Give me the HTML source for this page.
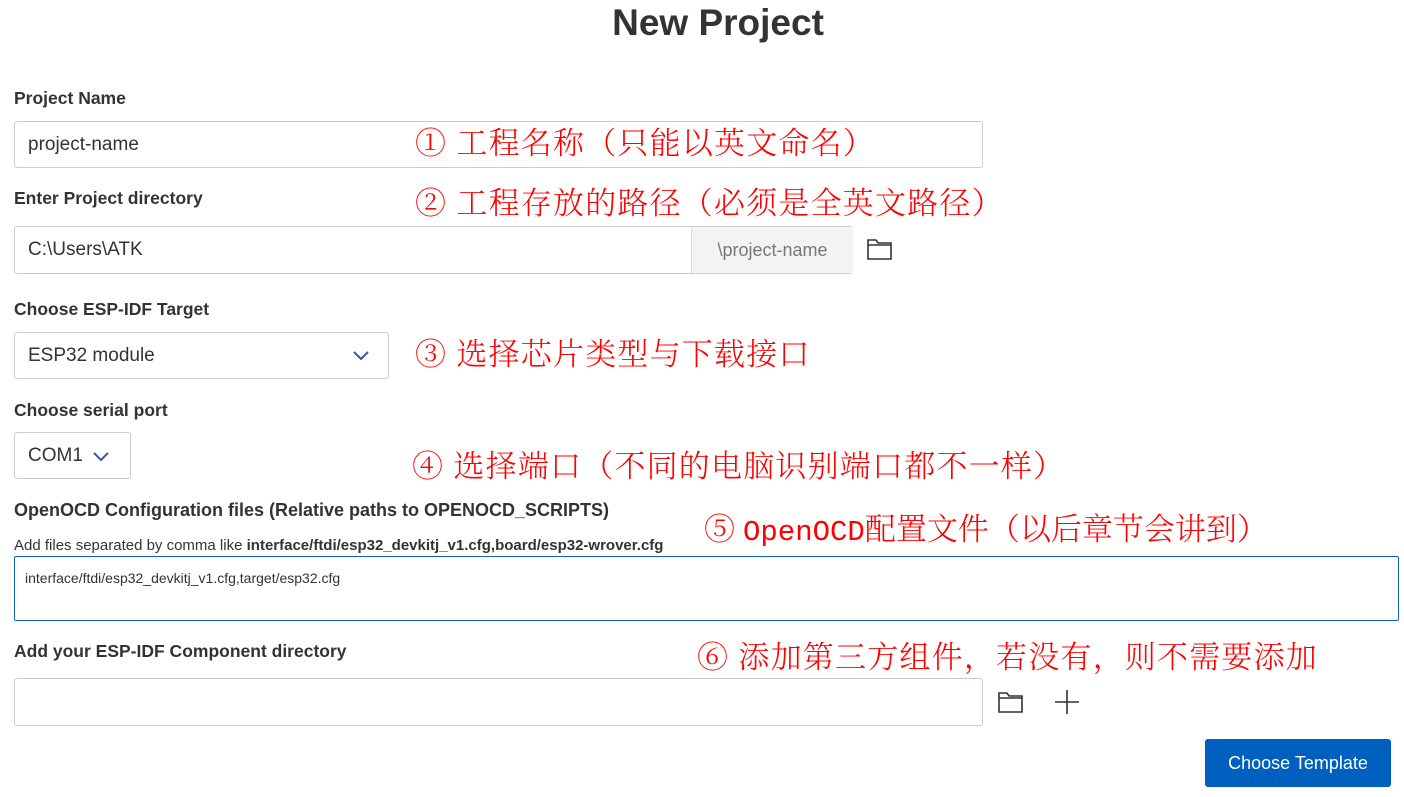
<!DOCTYPE html><html><head><meta charset="utf-8"><style>
body{margin:0;width:1404px;height:797px;background:#fff;font-family:"Liberation Sans",sans-serif;color:#333;position:relative;overflow:hidden}
.a{position:absolute}
h1{position:absolute;left:0;width:1436px;text-align:center;top:2px;margin:0;font-size:37px;font-weight:600;color:#333}
.l{position:absolute;left:14px;font-weight:bold;font-size:17.5px;color:#333}
.in{position:absolute;border:1px solid #ccc;border-radius:3px;box-sizing:border-box;font-size:19px;color:#333;padding-left:13px;display:flex;align-items:center;background:#fff}
.r{position:absolute;color:#f00;font-family:"Noto Serif CJK SC","Liberation Serif",serif;font-weight:300;font-size:31px;letter-spacing:1.2px;white-space:nowrap;line-height:1}
</style></head><body>
<h1>New Project</h1>
<div class="l" style="top:88px">Project Name</div>
<div class="in" style="left:14px;top:121px;width:969px;height:47px">project-name</div>
<div class="l" style="top:188px">Enter Project directory</div>
<div class="in" style="left:14px;top:226px;width:839px;height:48px">C:\Users\ATK</div>
<div class="a" style="left:691px;top:227px;width:161px;height:46px;background:#f3f3f3;border-left:1px solid #ddd;color:#777;font-size:18px;display:flex;align-items:center;justify-content:center">\project-name</div>
<svg class="a" style="left:866px;top:237px" width="28" height="24" viewBox="0 0 28 24"><path d="M2 3h8l2 3h13v16H2z M2 8h23" fill="none" stroke="#333" stroke-width="1.6"/></svg>
<div class="l" style="top:299px">Choose ESP-IDF Target</div>
<div class="in" style="left:14px;top:332px;width:375px;height:47px">ESP32 module</div>
<svg class="a" style="left:353px;top:350px" width="16" height="12"><path d="M1 2l7 7 7-7" fill="none" stroke="#3c55a5" stroke-width="2"/></svg>
<div class="l" style="top:400px">Choose serial port</div>
<div class="in" style="left:14px;top:432px;width:117px;height:47px">COM1</div>
<svg class="a" style="left:93px;top:451px" width="16" height="12"><path d="M1 2l7 7 7-7" fill="none" stroke="#3c55a5" stroke-width="2"/></svg>
<div class="l" style="top:500px;font-size:18px">OpenOCD Configuration files (Relative paths to OPENOCD_SCRIPTS)</div>
<div class="a" style="left:14px;top:537px;font-size:15px;color:#333">Add files separated by comma like <b>interface/ftdi/esp32_devkitj_v1.cfg,board/esp32-wrover.cfg</b></div>
<div class="a" style="left:14px;top:556px;width:1385px;height:65px;border:1px solid #0b63c1;border-radius:2px;box-sizing:border-box;font-size:14px;padding:13px 0 0 10px;color:#333">interface/ftdi/esp32_devkitj_v1.cfg,target/esp32.cfg</div>
<div class="l" style="top:641px">Add your ESP-IDF Component directory</div>
<div class="in" style="left:14px;top:678px;width:969px;height:48px"></div>
<svg class="a" style="left:997px;top:690px" width="28" height="24" viewBox="0 0 28 24"><path d="M2 3h8l2 3h13v16H2z M2 8h23" fill="none" stroke="#333" stroke-width="1.6"/></svg>
<svg class="a" style="left:1054px;top:689px" width="26" height="26"><path d="M13 1v24M1 13h24" stroke="#333" stroke-width="1.6"/></svg>
<div class="a" style="left:1205px;top:739px;width:186px;height:48px;background:#0060bf;border-radius:3px;color:#fff;font-size:18px;display:flex;align-items:center;justify-content:center">Choose Template</div>
<div class="r" style="left:415px;top:125px">①&nbsp;工程名称（只能以英文命名）</div>
<div class="r" style="left:415px;top:185px">②&nbsp;工程存放的路径（必须是全英文路径）</div>
<div class="r" style="left:415px;top:336px">③&nbsp;选择芯片类型与下载接口</div>
<div class="r" style="left:412px;top:448px">④&nbsp;选择端口（不同的电脑识别端口都不一样）</div>
<div class="r" style="left:704px;top:511px;letter-spacing:0">⑤&nbsp;<span style="font-family:'Liberation Mono',monospace;font-size:29px">OpenOCD</span>配置文件（以后章节会讲到）</div>
<div class="r" style="left:697px;top:639px">⑥&nbsp;添加第三方组件，若没有，则不需要添加</div>
</body></html>
